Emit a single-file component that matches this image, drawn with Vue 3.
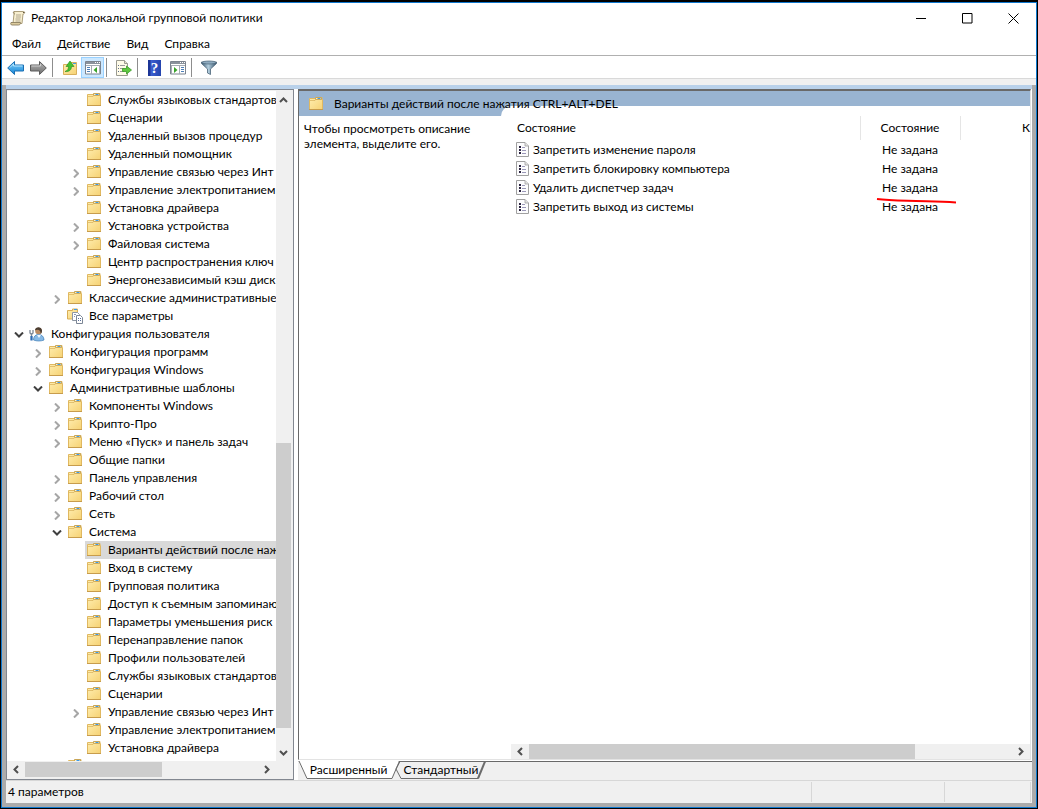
<script setup>
const menus = ['Файл', 'Действие', 'Вид', 'Справка']

// [level, state, label]: state is '' (leaf), '>' (collapsed) or 'v' (expanded)
const rows = [
  [4, '', 'Службы языковых стандартов'],
  [4, '', 'Сценарии'],
  [4, '', 'Удаленный вызов процедур'],
  [4, '', 'Удаленный помощник'],
  [4, '>', 'Управление связью через Инт'],
  [4, '>', 'Управление электропитанием'],
  [4, '', 'Установка драйвера'],
  [4, '>', 'Установка устройства'],
  [4, '>', 'Файловая система'],
  [4, '', 'Центр распространения ключ'],
  [4, '', 'Энергонезависимый кэш диск'],
  [3, '>', 'Классические административные'],
  [3, '', 'Все параметры', 'all'],
  [1, 'v', 'Конфигурация пользователя', 'user'],
  [2, '>', 'Конфигурация программ'],
  [2, '>', 'Конфигурация Windows'],
  [2, 'v', 'Административные шаблоны'],
  [3, '>', 'Компоненты Windows'],
  [3, '>', 'Крипто-Про'],
  [3, '>', 'Меню «Пуск» и панель задач'],
  [3, '', 'Общие папки'],
  [3, '>', 'Панель управления'],
  [3, '>', 'Рабочий стол'],
  [3, '>', 'Сеть'],
  [3, 'v', 'Система'],
  [4, '', 'Варианты действий после наж'],
  [4, '', 'Вход в систему'],
  [4, '', 'Групповая политика'],
  [4, '', 'Доступ к съемным запоминаю'],
  [4, '', 'Параметры уменьшения риск'],
  [4, '', 'Перенаправление папок'],
  [4, '', 'Профили пользователей'],
  [4, '', 'Службы языковых стандартов'],
  [4, '', 'Сценарии'],
  [4, '>', 'Управление связью через Инт'],
  [4, '', 'Управление электропитанием'],
  [4, '', 'Установка драйвера'],
  [3, '', ''],
].map(([level, state, label, icon = 'folder'], i) => ({ level, state, label, icon, selected: i === 25 }))

const policies = [
  'Запретить изменение пароля',
  'Запретить блокировку компьютера',
  'Удалить диспетчер задач',
  'Запретить выход из системы',
]
</script>

<template>
  <div class="desktop">
    <svg class="defs" width="0" height="0" aria-hidden="true">
      <defs>
        <linearGradient id="gFolder" x1="0" y1="0" x2="1" y2="1">
          <stop offset="0" stop-color="#ffeeb0" />
          <stop offset="1" stop-color="#f6d274" />
        </linearGradient>
        <linearGradient id="gBlue" x1="0" y1="0" x2="0" y2="1">
          <stop offset="0" stop-color="#7fd0fa" />
          <stop offset="1" stop-color="#1484d6" />
        </linearGradient>
        <linearGradient id="gGray" x1="0" y1="0" x2="0" y2="1">
          <stop offset="0" stop-color="#b5b5b5" />
          <stop offset="1" stop-color="#6d6d6d" />
        </linearGradient>
        <linearGradient id="gFunnel" x1="0" y1="0" x2="1" y2="0">
          <stop offset="0" stop-color="#39586f" />
          <stop offset="0.45" stop-color="#b4cfdf" />
          <stop offset="1" stop-color="#35536b" />
        </linearGradient>
        <symbol id="folder" viewBox="0 0 16 16">
          <path d="M1.500 2.500h5.500l1-1h6v1.500l.5.500v10h-13z" fill="url(#gFolder)" stroke="#e0b860" />
          <path d="M7.500 3.500v-2h6v2z" fill="#fdf3cf" stroke="#c9a658" />
          <path d="M9.500 2h3v1h-3z" fill="#3f9be8" />
          <path d="M2 4.500h5l1-1h6" fill="none" stroke="#d7b05a" stroke-width=".7" />
          <path d="M1 13.500h14" stroke="#c79c4c" />
        </symbol>
        <symbol id="all" viewBox="0 0 16 16">
          <path d="M.5 2.500h5V1h5v10H.5z" fill="url(#gFolder)" stroke="#d9ae55" />
          <path d="M7 1.500h3" stroke="#3f9be8" />
          <path d="M5.500 4.500h5l2 2v6h-7z" fill="#fff" stroke="#8d96a3" />
          <path d="M9.500 7.500h4l2 2v6h-6z" fill="#fff" stroke="#7d8796" />
          <path d="M11 10.500h1M11 12.500h1M13 10.500h1M13 12.500h1" stroke="#5a6f9c" />
          <path d="M7 6.500h2M7 8.500h1" stroke="#8793b0" />
        </symbol>
        <symbol id="user" viewBox="0 0 16 16">
          <path d="M4.500 14c0-3.500 2-5.500 5-5.500s5.500 2 5.500 5.500c-3 1.300-7.500 1.300-10.500 0z" fill="#86b9e6" stroke="#4a86bd" stroke-width=".8" />
          <path d="M8 9l2 3 2-3z" fill="#eef6ff" />
          <circle cx="9.500" cy="5" r="3.300" fill="#b98a62" />
          <path d="M6 4.500C6 .5 12.500 0 13 4.500c0 2-.6 3-1.500 3.500C12 6 11 4 9 3.800 7.500 3.700 6.500 4 6 4.500z" fill="#4a3c30" />
          <path d="M1 4v3l1.500 1.500L4 7V4M2.500 8v6" fill="none" stroke="#7c8795" stroke-width="1.300" />
          <path d="M2.500 10v4.500" stroke="#2c6bb5" stroke-width="2.200" />
        </symbol>
        <symbol id="policy" viewBox="0 0 13 15">
          <path d="M.5.5h8.500l3.500 3.500v10.500H.5z" fill="#fcfcfd" stroke="#a0a0a0" />
          <path d="M9 .5V4h3.500" fill="#e4e4e4" stroke="#a0a0a0" stroke-width=".8" />
          <path d="M3 4h2v2H3zM3 7h2v2H3zM3 10h2v2H3z" fill="#2b2440" />
          <path d="M6 5.500h3M6 8.500h4M6 11.500h4" stroke="#9a97b8" />
        </symbol>
      </defs>
    </svg>

    <main class="window">
      <header class="titlebar">
        <svg class="scroll-icon" width="16" height="16" viewBox="0 0 16 16">
          <path d="M4 1.500h9.500c1.500 0 1.500 2 0 2.500H13l-1 9.500H3L4 4z" fill="#f8efcf" stroke="#a3946f" stroke-width=".9" />
          <path d="M4 1.500c-1.500 1 0 2.500 1 2.500M1 12.500h9.500c0 2-1 2.500-2 2.500H2c-1.300 0-1.600-1.500-1-2.500z" fill="#dccb9d" stroke="#8b7e5f" stroke-width=".9" />
          <path d="M6 5h5M6 7h5M5.500 9h5M5.500 11h5" stroke="#a99f88" stroke-width=".9" />
          <path d="M13 2.500h1.500" stroke="#665b43" />
        </svg>
        <h1>Редактор локальной групповой политики</h1>
        <div class="controls">
          <button aria-label="Свернуть"><svg width="11" height="11"><path d="M0 5.500h10" /></svg></button>
          <button aria-label="Развернуть"><svg width="11" height="11"><path d="M.5.5h9.500v9.500H.5z" /></svg></button>
          <button aria-label="Закрыть"><svg width="11" height="11"><path d="M.5.5l10 10M10.500.5l-10 10" /></svg></button>
        </div>
      </header>

      <nav class="menubar">
        <button v-for="m in menus" :key="m">{{ m }}</button>
      </nav>

      <div class="toolbar">
        <button aria-label="Назад">
          <svg width="17" height="16" viewBox="0 0 17 16"><path d="M.7 8L7.500 1.500V5h9v6h-9v3.500z" fill="url(#gBlue)" stroke="#1b6fb3" /><path d="M3 7.500L6.500 4v2h9" fill="none" stroke="#b5e4fd" /></svg>
        </button>
        <button aria-label="Вперед">
          <svg width="17" height="16" viewBox="0 0 17 16"><path d="M16.300 8L9.500 1.500V5h-9v6h9v3.500z" fill="url(#gGray)" stroke="#5c5c5c" /><path d="M1.500 6h9V4" fill="none" stroke="#cecece" /></svg>
        </button>
        <i class="sep"></i>
        <button aria-label="Вверх">
          <svg width="16" height="16" viewBox="0 0 16 16"><path d="M1.500 4.500h6l1-2h6v12h-13z" fill="url(#gFolder)" stroke="#d8b05c" /><path d="M11 3.500h3" stroke="#3f9be8" /><path d="M3 11.500c3-1 3.500-3 3.500-5H4l4-5.500 4 5.500H9.500c0 3.500-2.500 5.500-6.500 5z" fill="#44c131" stroke="#258a1a" stroke-width=".6" /></svg>
        </button>
        <button class="pressed" aria-label="Дерево консоли">
          <svg width="16" height="14" viewBox="0 0 16 14"><path d="M.5.5h15v12.500H.5z" fill="#fff" stroke="#7b838e" /><path d="M1 1h14v2H1z" fill="#8a929c" /><path d="M10 1.500h1M12 1.500h1M14 1.500h1" stroke="#fff" /><path d="M1 4.500h14M6.500 5v8M14.500 5v8" stroke="#a4abb3" /><path d="M2 6.500h3M2 8.500h3M2 10.500h3" stroke="#4d7fb8" /><path d="M12 6v6L8.500 9z" fill="#38a32a" /></svg>
        </button>
        <i class="sep"></i>
        <button aria-label="Экспорт списка">
          <svg width="17" height="16" viewBox="0 0 17 16"><path d="M1.500.5h8l3 3v12h-11z" fill="#fffbe8" stroke="#9a9a90" /><path d="M9.500.5v3h3" fill="#e6e2cc" stroke="#9a9a90" /><path d="M3 5.500h1M3 8.500h1M3 11.500h1" stroke="#5d6d8f" /><path d="M5 5.500h5M5 8.500h4M5 11.500h4" stroke="#9a9a9a" /><path d="M7.500 8.500h4V6l5 4-5 4v-2.500h-4z" fill="#5fc83f" stroke="#3b9a28" stroke-width=".8" /></svg>
        </button>
        <i class="sep"></i>
        <button class="help" aria-label="Справка"><span>?</span></button>
        <button aria-label="Панель действий">
          <svg width="16" height="14" viewBox="0 0 16 14"><path d="M.5.5h15v12.500H.5z" fill="#fff" stroke="#7b838e" /><path d="M1 1h14v2H1z" fill="#8a929c" /><path d="M10 1.500h1M12 1.500h1M14 1.500h1" stroke="#fff" /><path d="M1 4.500h14M1.500 5v8M9.500 5v8" stroke="#a4abb3" /><path d="M11 6.500h3M11 8.500h3M11 10.500h3" stroke="#4d7fb8" /><path d="M4 6v6l3.500-3z" fill="#38a32a" /></svg>
        </button>
        <i class="sep"></i>
        <button aria-label="Фильтр">
          <svg width="16" height="16" viewBox="0 0 16 16"><path d="M.5 2h15v1.500L9.500 9v5.500l-3-1.500V9L.5 3.500z" fill="url(#gFunnel)" stroke="#4b6578" stroke-width=".8" /><ellipse cx="8" cy="2.500" rx="7" ry="1.500" fill="#8fabc0" stroke="#4b6578" stroke-width=".7" /></svg>
        </button>
      </div>

      <div class="band"></div>

      <div class="frame">
        <div class="panes">
          <aside class="tree-pane">
            <ul class="tree">
              <li v-for="(r, i) in rows" :key="i" :class="'l' + r.level">
                <span class="twist">
                  <svg v-if="r.state === '>'" width="6" height="9"><path d="M1 .5l4 4-4 4" class="closed" /></svg>
                  <svg v-else-if="r.state === 'v'" width="10" height="6"><path d="M1 .5l4 4 4-4" class="open" /></svg>
                </span>
                <span class="node" :class="{ selected: r.selected }">
                  <svg width="16" height="16"><use :href="'#' + r.icon" /></svg>
                  <span>{{ r.label }}</span>
                </span>
              </li>
            </ul>
            <div class="vbar">
              <button aria-label="Вверх"><svg width="9" height="6"><path d="M1 5l3.500-3.500L8 5" /></svg></button>
              <div class="vtrack"><div class="vthumb"></div></div>
              <button aria-label="Вниз"><svg width="9" height="6"><path d="M1 1l3.500 3.500L8 1" /></svg></button>
            </div>
            <div class="hbar">
              <button aria-label="Влево"><svg width="6" height="9"><path d="M5 1L1.500 4.500 5 8" /></svg></button>
              <div class="htrack"><div class="hthumb"></div></div>
              <button aria-label="Вправо"><svg width="6" height="9"><path d="M1 1l3.500 3.500L1 8" /></svg></button>
            </div>
          </aside>

          <section class="right">
            <div class="result">
              <div class="heading">
                <svg width="16" height="16"><use href="#folder" /></svg>
                <h2>Варианты действий после нажатия CTRL+ALT+DEL</h2>
              </div>
              <div class="body">
                <p class="desc">Чтобы просмотреть описание элемента, выделите его.</p>
                <div class="list">
                  <table>
                    <colgroup><col /><col class="c-state" /><col class="c-note" /></colgroup>
                    <thead>
                      <tr><th>Состояние</th><th>Состояние</th><th>К</th></tr>
                    </thead>
                    <tbody>
                      <tr v-for="(p, i) in policies" :key="p">
                        <td><span class="policy"><svg width="13" height="15"><use href="#policy" /></svg>{{ p }}</span></td>
                        <td>Не задана<svg v-if="i === 2" class="mark" width="82" height="8"><path d="M1 2C12 3.500 22 3.500 40 4S65 4.500 80 5.500" /></svg></td>
                        <td></td>
                      </tr>
                    </tbody>
                  </table>
                  <div class="hbar list-bar">
                    <button aria-label="Влево"><svg width="6" height="9"><path d="M5 1L1.500 4.500 5 8" /></svg></button>
                    <div class="htrack"><div class="hthumb"></div></div>
                    <button aria-label="Вправо"><svg width="6" height="9"><path d="M1 1l3.500 3.500L1 8" /></svg></button>
                  </div>
                </div>
              </div>
            </div>
            <div class="tabs">
              <button class="tab active">
                <svg width="101" height="19"><path class="fill" d="M0 0h101l-8 18H9z" /><path d="M1 0l8 17.500h85L101.500 0" /></svg>
                <span>Расширенный</span>
              </button>
              <button class="tab">
                <svg width="92" height="19"><path d="M5 .5L1 8l5 9.500h77M5 .5h87" /><path class="edge" d="M83 17.500L90 .5" /></svg>
                <span>Стандартный</span>
              </button>
            </div>
          </section>
        </div>

        <footer class="status">
          <span>4 параметров</span><i></i><i></i>
        </footer>
      </div>
    </main>
  </div>
</template>

<style>
body {
  margin: 0;
  background: #000;
}
</style>

<style scoped>
* {
  box-sizing: border-box;
}
.desktop {
  height: 100vh;
  padding: 2px 1px 1px;
  background: #000;
  color: #000;
  font: 12px/18px Lato, "Open Sans", sans-serif;
}
.defs {
  position: absolute;
}
svg {
  display: block;
  flex: none;
}
button {
  border: 0;
  padding: 0;
  background: none;
  font: inherit;
  color: inherit;
}
h1, h2, p, ul {
  margin: 0;
  padding: 0;
  font: inherit;
}
.window {
  display: flex;
  flex-direction: column;
  height: 100%;
  border: 1px solid #0f78cf;
  background: #fff;
}
.titlebar {
  display: flex;
  align-items: center;
  height: 30px;
  padding-left: 8px;
  gap: 5px;
}
.controls {
  display: flex;
  margin-left: auto;
}
.controls button {
  display: flex;
  align-items: center;
  justify-content: center;
  width: 46px;
  height: 28px;
}
.controls path {
  fill: none;
  stroke: #000;
}
.menubar {
  display: flex;
  gap: 16px;
  height: 23px;
  padding-left: 10px;
  border-bottom: 1px solid #b0b0b0;
}
.toolbar {
  display: flex;
  align-items: flex-end;
  height: 23px;
  border-bottom: 1px solid #d9d9d9;
  padding-left: 2px;
}
.toolbar button {
  display: flex;
  align-items: center;
  justify-content: center;
  width: 23px;
  height: 21px;
}
.toolbar .pressed {
  border: 1px solid #99d1ff;
  background: #cce8ff;
}
.sep {
  width: 1px;
  height: 19px;
  margin: 0 5px 1px 2px;
  background: #8d8d8d;
}
.help span {
  width: 13px;
  height: 16px;
  background: linear-gradient(90deg, #1c3596 2px, #3c5fd0 3px, #2444ae);
  color: #fff;
  font: bold 15px/16px "Liberation Serif", serif;
}
.band {
  height: 6px;
  background: #f0f0f0;
}
.frame {
  flex: 1;
  min-height: 0;
  display: flex;
  flex-direction: column;
  padding: 0 4px 4px;
  background: #ababab;
}
.panes {
  flex: 1;
  min-height: 0;
  display: flex;
  padding-top: 4px;
  background: linear-gradient(#b9d1ea 4px, #fff 4px);
}
.tree-pane {
  display: grid;
  grid-template-columns: minmax(0, 1fr) 15px;
  grid-template-rows: minmax(0, 1fr) 16px;
  flex: none;
  width: 288px;
  border: 1px solid #828790;
  padding: 1px 2px 2px 0;
  background: #f0f0f0;
}
.tree {
  list-style: none;
  overflow: hidden;
  background: #fff;
}
.tree li {
  display: flex;
  height: 18px;
  white-space: nowrap;
}
.l1 { padding-left: 4px; }
.l2 { padding-left: 23px; }
.l3 { padding-left: 42px; }
.l4 { padding-left: 61px; }
.twist {
  display: flex;
  flex: none;
  align-items: center;
  justify-content: center;
  width: 15px;
  padding-top: 2px;
}
.twist path {
  fill: none;
  stroke-width: 2;
}
.closed { stroke: #a6a6a6; }
.open { stroke: #404040; }
.node {
  display: flex;
  flex: 1 0 auto;
  align-items: center;
  gap: 6px;
  padding-left: 3px;
}
.selected {
  background: linear-gradient(90deg, transparent 2px, #d9d9d9 2px);
}
.vbar {
  display: flex;
  flex-direction: column;
  background: #f0f0f0;
}
.vbar button {
  display: flex;
  align-items: center;
  justify-content: center;
  height: 17px;
}
.vtrack {
  display: flex;
  flex-direction: column;
  justify-content: flex-end;
  flex: 1;
  padding-bottom: 16px;
}
.vthumb {
  height: 46%;
  background: #cdcdcd;
}
.hbar {
  display: flex;
  height: 15px;
  background: #f0f0f0;
}
.tree-pane .hbar {
  align-self: end;
}
.hbar button {
  display: flex;
  align-items: center;
  justify-content: center;
  width: 18px;
}
.vbar path, .hbar path {
  fill: none;
  stroke: #505050;
  stroke-width: 2;
}
.htrack {
  flex: 1;
}
.hthumb {
  width: 59%;
  height: 15px;
  background: #cdcdcd;
}
.right {
  flex: 1;
  min-width: 0;
  display: flex;
  flex-direction: column;
  margin-left: 4px;
}
.result {
  flex: 1;
  min-height: 0;
  display: flex;
  flex-direction: column;
  border: 1px solid #e3e3e3;
  border-top: 2px solid #696969;
  border-left-color: #696969;
  margin: 0 1px 1px 0;
  background: #fff;
}
.heading {
  display: flex;
  flex: none;
  align-items: center;
  gap: 10px;
  height: 25px;
  padding-left: 9px;
  background: #99b4d1;
}
.heading h2 {
  position: relative;
  z-index: 1;
}
.body {
  flex: 1;
  min-height: 0;
  display: flex;
}
.desc {
  flex: none;
  width: 202px;
  padding: 5px 20px 0 5px;
  line-height: 15px;
}
.list {
  flex: 1;
  min-width: 0;
  display: flex;
  flex-direction: column;
  justify-content: space-between;
  margin-top: -10px;
  border-top-left-radius: 10px;
  padding-top: 10px;
  background: #fff;
}
table {
  width: 100%;
  table-layout: fixed;
  border-collapse: collapse;
}
.c-state { width: 100px; }
.c-note { width: 70px; }
th {
  height: 24px;
  padding: 0;
  font-weight: normal;
  border-right: 1px solid #e5e5e5;
}
th:first-child {
  padding-left: 16px;
  text-align: left;
}
th:last-child {
  border-right: 0;
  text-align: right;
}
td {
  position: relative;
  height: 19px;
  padding: 0;
  text-align: center;
}
.policy {
  display: flex;
  align-items: center;
  gap: 4px;
  padding-left: 15px;
}
.mark {
  position: absolute;
  left: 16px;
  top: 19px;
}
.mark path {
  fill: none;
  stroke: #f00;
  stroke-width: 2;
}
.list-bar {
  margin-left: 10px;
}
.list-bar .hthumb {
  width: 80%;
}
.tabs {
  display: flex;
  height: 19px;
  background: linear-gradient(#696969 1px, #f0f0f0 1px);
}
.tab {
  position: relative;
  display: grid;
  margin-right: -4px;
}
.tab > * {
  grid-area: 1 / 1;
}
.tab path {
  fill: none;
  stroke: #6b6b6b;
}
.tab .fill {
  fill: #fff;
  stroke: none;
}
.tab .edge {
  stroke-width: 2;
}
.status {
  display: flex;
  flex: none;
  align-items: center;
  height: 23px;
  border-top: 1px solid #d7d7d7;
  padding-left: 2px;
  background: #f0f0f0;
}
.status span {
  flex: 1;
}
.status i {
  width: 133px;
  height: 20px;
  border-left: 1px solid #d7d7d7;
}
.status i:last-child {
  width: 87px;
  margin-right: 1px;
  border-right: 1px solid #d7d7d7;
}
</style>
